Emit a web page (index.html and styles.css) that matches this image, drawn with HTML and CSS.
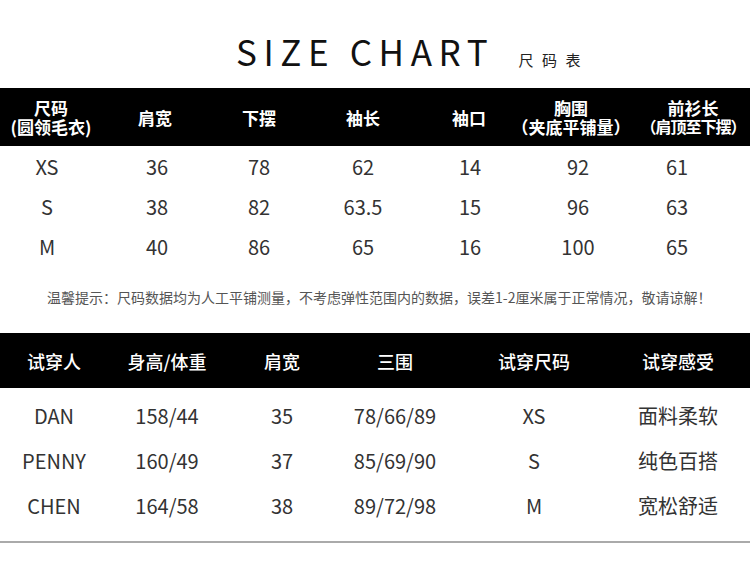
FILE: index.html
```html
<!DOCTYPE html>
<html lang="zh">
<head>
<meta charset="utf-8">
<link rel="stylesheet" href="styles.css">
</head>
<body>
<div class="page">
  <div class="title">
    <span class="title-en">SIZE CHART</span>
    <span class="title-cn">尺码表</span>
  </div>

  <div class="head1">
    <div class="c"><span>尺码</span><span>(圆领毛衣)</span></div>
    <div class="c"><span>肩宽</span></div>
    <div class="c"><span>下摆</span></div>
    <div class="c"><span>袖长</span></div>
    <div class="c"><span>袖口</span></div>
    <div class="c"><span>胸围</span><span>（夹底平铺量）</span></div>
    <div class="c last"><span>前衫长</span><span class="tight">（肩顶至下摆）</span></div>
  </div>
  <div class="body1">
    <div class="c">XS</div><div class="c">36</div><div class="c">78</div><div class="c">62</div><div class="c">14</div><div class="c">92</div><div class="c">61</div>
    <div class="c">S</div><div class="c">38</div><div class="c">82</div><div class="c">63.5</div><div class="c">15</div><div class="c">96</div><div class="c">63</div>
    <div class="c">M</div><div class="c">40</div><div class="c">86</div><div class="c">65</div><div class="c">16</div><div class="c">100</div><div class="c">65</div>
  </div>

  <p class="note">温馨提示：尺码数据均为人工平铺测量，不考虑弹性范围内的数据，误差1-2厘米属于正常情况，敬请谅解！</p>

  <div class="head2">
    <div class="c">试穿人</div>
    <div class="c">身高/体重</div>
    <div class="c">肩宽</div>
    <div class="c">三围</div>
    <div class="c">试穿尺码</div>
    <div class="c">试穿感受</div>
  </div>
  <div class="body2">
    <div class="c">DAN</div><div class="c">158/44</div><div class="c">35</div><div class="c">78/66/89</div><div class="c">XS</div><div class="c">面料柔软</div>
    <div class="c">PENNY</div><div class="c">160/49</div><div class="c">37</div><div class="c">85/69/90</div><div class="c">S</div><div class="c">纯色百搭</div>
    <div class="c">CHEN</div><div class="c">164/58</div><div class="c">38</div><div class="c">89/72/98</div><div class="c">M</div><div class="c">宽松舒适</div>
  </div>
  <div class="rule"></div>
</div>
</body>
</html>
```

FILE: styles.css
```css
* { box-sizing: border-box; }
html, body { margin: 0; padding: 0; background: #fff; }
body {
  width: 750px;
  height: 566px;
  overflow: hidden;
  font-family: "Noto Sans CJK SC", "Noto Sans", sans-serif;
  color: #333;
}
.page { width: 750px; }

.title {
  height: 88px;
  display: flex;
  align-items: baseline;
  padding-left: 236px;
  padding-top: 27px;
}
.title-en {
  font-size: 35px;
  font-weight: 400;
  letter-spacing: 6.6px;
  color: #111;
  line-height: 48px;
}
.title-cn {
  margin-left: 24px;
  font-size: 15px;
  letter-spacing: 8.5px;
  color: #222;
}

.c {
  display: flex;
  flex-direction: column;
  align-items: center;
  justify-content: center;
  white-space: nowrap;
}

.head1 {
  height: 58px;
  background: #000;
  color: #fff;
  display: grid;
  grid-template-columns: 102px 106px 102px 106px 106px 98px 130px;
  font-size: 17px;
  font-weight: 700;
  line-height: 19px;
}
.head1 .last { padding-left: 16px; }
.head1 .tight { font-size: 16px; letter-spacing: -1px; }

.body1 {
  display: grid;
  grid-template-columns: 94px 126px 78px 130px 84px 132px 66px;
  grid-auto-rows: 40px;
  font-size: 20px;
  color: #333;
}

.note {
  margin: 21px 0 0 47px;
  height: 20px;
  font-size: 14px;
  line-height: 20px;
  color: #555;
  white-space: nowrap;
}

.head2 {
  margin-top: 26px;
  height: 55px;
  background: #000;
  color: #fff;
  display: grid;
  grid-template-columns: 108px 118px 112px 114px 164px 124px;
  font-size: 18px;
  font-weight: 500;
}

.body2 {
  padding-top: 5px;
  display: grid;
  grid-template-columns: 108px 118px 112px 114px 164px 124px;
  grid-auto-rows: 45px;
  font-size: 20px;
  color: #333;
}

.rule {
  margin-top: 13px;
  height: 2px;
  background: #aaa;
}
```
